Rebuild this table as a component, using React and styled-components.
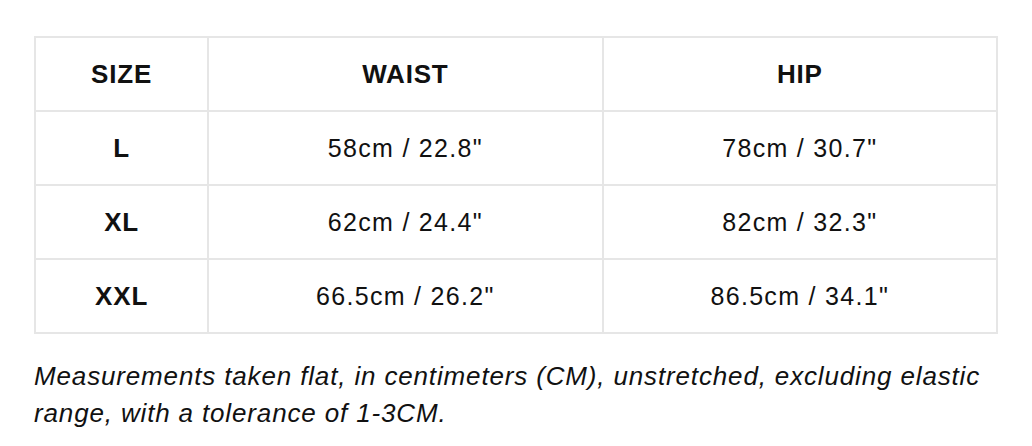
import React from "react";
import styled, { createGlobalStyle } from "styled-components";

const Global = createGlobalStyle`
  html, body { margin: 0; padding: 0; background: #fff; }
  body { font-family: "Liberation Sans", Arial, Helvetica, sans-serif; color: #111; }
`;

const Page = styled.div`
  padding: 36px 34px 0 34px;
`;

const Table = styled.table`
  width: 100%;
  border-collapse: collapse;
  table-layout: fixed;
  border: 2px solid #e6e6e6;
`;

const Cell = styled.td`
  border: 2px solid #e6e6e6;
  height: 72px;
  padding: 0;
  text-align: center;
  vertical-align: middle;
  font-size: ${(p) => (p.$head ? "26px" : "25px")};
  letter-spacing: ${(p) => (p.$head ? "0.8px" : "1.3px")};
  font-weight: ${(p) => (p.$bold ? 700 : 400)};
  color: #111;
`;

const Note = styled.p`
  margin: 24px 0 0 0;
  font-size: 26px;
  font-style: italic;
  line-height: 37px;
  letter-spacing: 0.85px;
  color: #111;
`;

const rows = [
  ["L", "58cm / 22.8\"", "78cm / 30.7\""],
  ["XL", "62cm / 24.4\"", "82cm / 32.3\""],
  ["XXL", "66.5cm / 26.2\"", "86.5cm / 34.1\""],
];

export default function App() {
  return (
    <Page>
      <Global />
      <Table>
        <colgroup>
          <col style={{ width: "18%" }} />
          <col style={{ width: "41%" }} />
          <col style={{ width: "41%" }} />
        </colgroup>
        <tbody>
          <tr>
            <Cell $bold $head>SIZE</Cell>
            <Cell $bold $head>WAIST</Cell>
            <Cell $bold $head>HIP</Cell>
          </tr>
          {rows.map((r) => (
            <tr key={r[0]}>
              <Cell $bold $head>{r[0]}</Cell>
              <Cell>{r[1]}</Cell>
              <Cell>{r[2]}</Cell>
            </tr>
          ))}
        </tbody>
      </Table>
      <Note>
        Measurements taken flat, in centimeters (CM), unstretched, excluding elastic range, with a tolerance of 1-3CM.
      </Note>
    </Page>
  );
}
